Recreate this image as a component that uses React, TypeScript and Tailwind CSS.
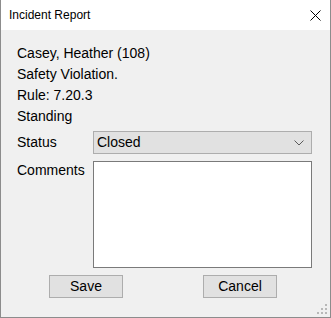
import React from 'react'

const lines = ['Casey, Heather (108)', 'Safety Violation.', 'Rule: 7.20.3', 'Standing']

const Grip: React.FC = () => (
  <svg width="11" height="11" viewBox="0 0 11 11" className="absolute right-[2px] bottom-[2px]">
    {[
      [8, 0],
      [8, 4],
      [4, 4],
      [8, 8],
      [4, 8],
      [0, 8],
    ].map(([x, y], i) => (
      <rect key={i} x={x} y={y} width="2" height="2" fill="#b8b8b8" />
    ))}
  </svg>
)

export default function App() {
  return (
    <div className="w-[331px] h-[318px] flex flex-col bg-[#f0f0f0] border-x border-b border-[#8c8c8c] font-['Liberation_Sans',Arial,sans-serif] text-black relative">
      <div className="h-[30px] bg-white flex items-center justify-between pl-[8px] pr-[9px] shrink-0">
        <span className="text-[12px]">Incident Report</span>
        <svg width="11" height="11" viewBox="0 0 11 11">
          <path d="M0.5 0.5 L10.5 10.5 M10.5 0.5 L0.5 10.5" stroke="#000" strokeWidth="1" />
        </svg>
      </div>
      <div className="flex flex-col pl-[16px] pr-[18px] pt-[13px] text-[14px]">
        {lines.map((l) => (
          <div key={l} className="h-[21px] leading-[21px]">
            {l}
          </div>
        ))}
        <div className="flex items-center mt-[4px]">
          <span className="w-[76px]">Status</span>
          <div className="flex-1 h-[23px] bg-[#e1e1e1] border border-[#adadad] flex items-center justify-between pl-[3px] pr-[7px]">
            <span>Closed</span>
            <svg width="10" height="6" viewBox="0 0 10 6">
              <path d="M0.5 0.5 L5 5 L9.5 0.5" fill="none" stroke="#5a5a5a" strokeWidth="1" />
            </svg>
          </div>
        </div>
        <div className="flex items-start mt-[7px]">
          <span className="w-[76px] leading-[18px]">Comments</span>
          <div className="flex-1 h-[107px] bg-white border border-[#7a7a7a]" />
        </div>
        <div className="flex mt-[7px]">
          <button className="ml-[32px] w-[74px] h-[23px] bg-[#e1e1e1] border border-[#adadad]">Save</button>
          <button className="ml-[80px] w-[74px] h-[23px] bg-[#e1e1e1] border border-[#adadad]">Cancel</button>
        </div>
      </div>
      <Grip />
    </div>
  )
}
